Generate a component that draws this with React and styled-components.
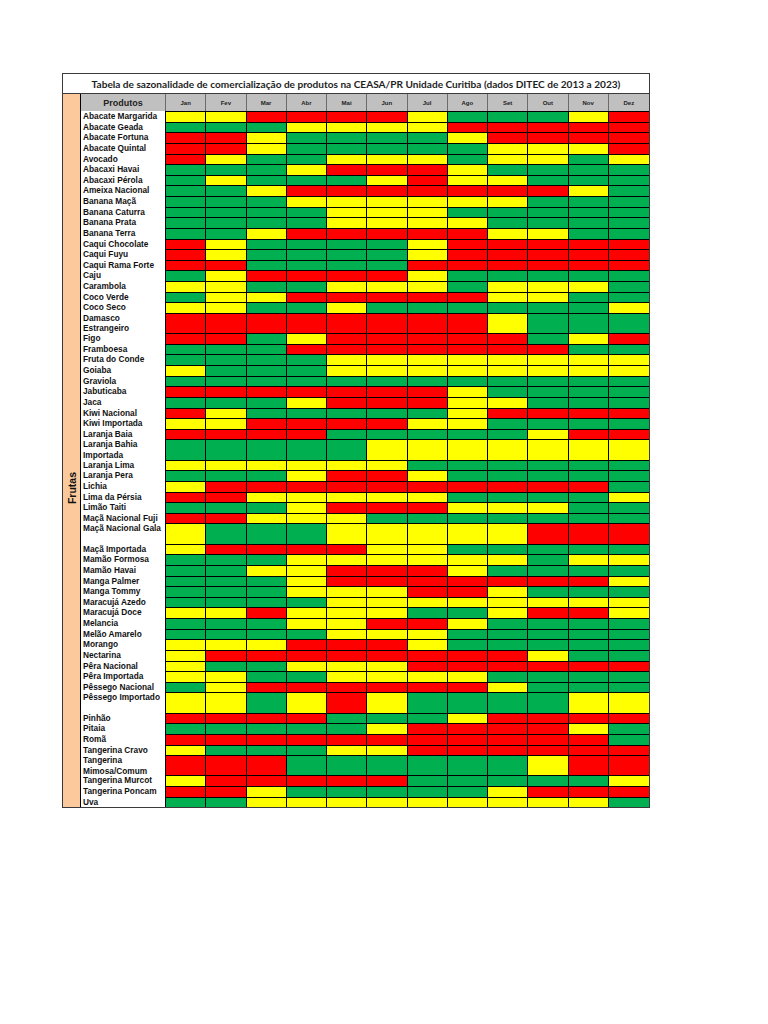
import styled, { createGlobalStyle } from 'styled-components'

const colors = { G: '#00b050', Y: '#ffff00', R: '#ff0000' }

const months = ['Jan', 'Fev', 'Mar', 'Abr', 'Mai', 'Jun', 'Jul', 'Ago', 'Set', 'Out', 'Nov', 'Dez']

// [nome, meses, linha dupla]
const produtos = [
  ['Abacate Margarida', 'YYRRRRYGGGYR'],
  ['Abacate Geada', 'GGGYYYYRRRRR'],
  ['Abacate Fortuna', 'RRYGGGGYRRRR'],
  ['Abacate Quintal', 'RRYGGGGGYYYR'],
  ['Avocado', 'RYGGYYYGYYGY'],
  ['Abacaxi Havai', 'GGGYRRRYGGGG'],
  ['Abacaxi Pérola', 'GYGGGYRYYGGG'],
  ['Ameixa Nacional', 'GGYRRRRRRRYG'],
  ['Banana Maçã', 'GGGYYYYYYGGG'],
  ['Banana Caturra', 'GGGGYYYGGGGG'],
  ['Banana Prata', 'GGGGYYYYGGGG'],
  ['Banana Terra', 'GGYRRRRRYYGG'],
  ['Caqui Chocolate', 'RYGGGGYRRRRR'],
  ['Caqui Fuyu', 'RYGGGGYRRRRR'],
  ['Caqui Rama Forte', 'RRGGGGRRRRRR'],
  ['Caju', 'GYRRRRYGGGGG'],
  ['Carambola', 'YYGGYYYGYYYG'],
  ['Coco Verde', 'GYYRRRRRYYGG'],
  ['Coco Seco', 'YYGGYGGGGGGY'],
  ['Damasco\nEstrangeiro', 'RRRRRRRRYGGG', true],
  ['Figo', 'RRGYRRRRRGYR'],
  ['Framboesa', 'GGGRRRRRRRGG'],
  ['Fruta do Conde', 'GGGGYYYYYYYY'],
  ['Goiaba', 'YGGGYYYYYYYY'],
  ['Graviola', 'GGGGGGGGGGGG'],
  ['Jabuticaba', 'RRRRRRRYGGGG'],
  ['Jaca', 'GGGYRRRYYGGG'],
  ['Kiwi Nacional', 'RYGGGGGYRRRR'],
  ['Kiwi Importada', 'YYRRRRYYGGGG'],
  ['Laranja Baia', 'RRRRGGGGGYRR'],
  ['Laranja Bahia\nImportada', 'GGGGGYYYYYYY', true],
  ['Laranja Lima', 'YYYYYYGGGGGG'],
  ['Laranja Pera', 'GGGYRRYGGGGG'],
  ['Lichia', 'YRRRRRRRRRRG'],
  ['Lima da Pérsia', 'RRYYYYYGGGGY'],
  ['Limão Taiti', 'GGGYRRRYYYGG'],
  ['Maçã Nacional Fuji', 'RRYYYGGGGGGG'],
  ['Maçã Nacional Gala', 'YGGGYYYYYRRR', true],
  ['Maçã Importada', 'YRRRRYYGGGGG'],
  ['Mamão Formosa', 'GGGYYYYYYGYY'],
  ['Mamão Havai', 'GGYYRRRYGGGG'],
  ['Manga Palmer', 'GGGYRRRRRRRY'],
  ['Manga Tommy', 'GGGYYYRRYGGG'],
  ['Maracujá Azedo', 'GGGGYYYYYYYY'],
  ['Maracujá Doce', 'YYRYYYGGYRRY'],
  ['Melancia', 'GGGYYRRYGGGG'],
  ['Melão Amarelo', 'GGGGYYYGGGGG'],
  ['Morango', 'YYYRRRYGGGGG'],
  ['Nectarina', 'YRRRRRRRRYGG'],
  ['Pêra Nacional', 'YGGYYYRRRRRR'],
  ['Pêra Importada', 'YYGGYYYYGGGG'],
  ['Pêssego Nacional', 'GYRRRRRRYGGG'],
  ['Pêssego Importado', 'YYGYRYGGGGYY', true],
  ['Pinhão', 'RRRRGGGYRRRR'],
  ['Pitaia', 'GGGGGYRRRRYG'],
  ['Romã', 'RRRRRRRRRRRG'],
  ['Tangerina Cravo', 'YGGGYYRRRRRR'],
  ['Tangerina\nMimosa/Comum', 'RRRGGGGGGYRR', true],
  ['Tangerina Murcot', 'YRRRRRGGGGGY'],
  ['Tangerina Poncam', 'RRYGGGGGYRRR'],
  ['Uva', 'GGYYYYYYYYYG'],
]

const GlobalStyle = createGlobalStyle`
  body {
    margin: 0;
    background: #fff;
  }
`

const Page = styled.div`
  padding: 73px 0 0 62px;
`

const Sheet = styled.div`
  width: 588px;
  box-sizing: border-box;
  border: 1px solid #3a3a3a;
`

const Title = styled.div`
  height: 19px;
  border-bottom: 1px solid #3a3a3a;
  display: flex;
  align-items: center;
  justify-content: center;
  font-family: Lato, "Liberation Sans", sans-serif;
  font-weight: 700;
  font-size: 10.1px;
  color: #1e1e1e;
  white-space: nowrap;
`

const Body = styled.div`
  display: flex;
`

const Strip = styled.div`
  width: 18px;
  flex: none;
  box-sizing: border-box;
  border-right: 1px solid #000;
  background: #fbc99b;
  display: flex;
  align-items: center;
  justify-content: center;
  padding-top: 76px;
`

const StripLabel = styled.span`
  writing-mode: vertical-rl;
  transform: rotate(180deg);
  font-family: "Liberation Sans", Arial, sans-serif;
  font-weight: 700;
  font-size: 10.5px;
  color: #111;
`

const Table = styled.div`
  flex: 1;
  display: flex;
  flex-direction: column;
`

const Rows = styled.div`
  height: 695px;
  display: flex;
  flex-direction: column;
`

const Row = styled.div`
  display: grid;
  grid-template-columns: 85px repeat(12, 1fr);
  box-sizing: border-box;
  border-bottom: 1px solid #000;
  min-height: 0;
  flex: ${(p) => (p.$tall ? 2 : 1)} 1 0;

  &:last-child {
    border-bottom: none;
  }
`

const HeadRow = styled(Row)`
  flex: none;
  height: 18px;
  background: #c0c0c0;
  border-bottom: 1px solid #000;
`

const HeadCell = styled.div`
  border-right: 1px solid #6b6b6b;
  display: flex;
  align-items: center;
  justify-content: center;
  font-family: "Liberation Sans", Arial, sans-serif;
  font-weight: 700;
  font-size: ${(p) => (p.$big ? '9px' : '6px')};
  color: #222;

  &:last-child {
    border-right: none;
  }
`

const Name = styled.div`
  background: #fff;
  border-right: 1px solid #000;
  padding-left: 2px;
  overflow: hidden;
  white-space: pre;
  font-family: "Liberation Sans", Arial, sans-serif;
  font-weight: 700;
  font-size: 8.3px;
  line-height: 10.5px;
  margin-top: -1px;
  color: #111;
`

const Cell = styled.div`
  background: ${(p) => colors[p.$c]};
  border-right: 1px solid #000;

  &:last-child {
    border-right: none;
  }
`

export default function App() {
  return (
    <Page>
      <GlobalStyle />
      <Sheet>
        <Title>
          Tabela de sazonalidade de comercialização de produtos na CEASA/PR Unidade Curitiba (dados DITEC de 2013 a 2023)
        </Title>
        <Body>
          <Strip>
            <StripLabel>Frutas</StripLabel>
          </Strip>
          <Table>
            <HeadRow>
              <HeadCell $big>Produtos</HeadCell>
              {months.map((m) => (
                <HeadCell key={m}>{m}</HeadCell>
              ))}
            </HeadRow>
            <Rows>
              {produtos.map(([nome, meses, tall]) => (
                <Row key={nome} $tall={tall}>
                  <Name>{nome}</Name>
                  {meses.split('').map((c, i) => (
                    <Cell key={i} $c={c} />
                  ))}
                </Row>
              ))}
            </Rows>
          </Table>
        </Body>
      </Sheet>
    </Page>
  )
}
